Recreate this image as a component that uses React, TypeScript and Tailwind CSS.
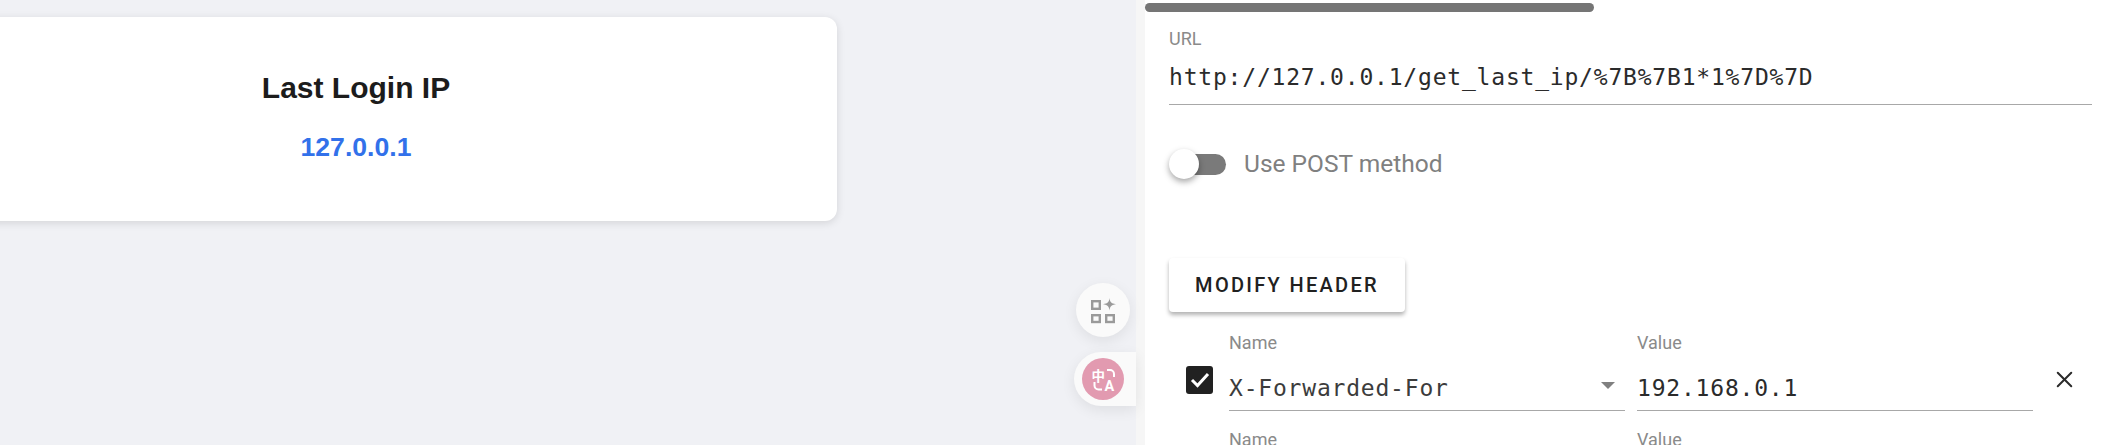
import { X } from 'lucide-react'

const MONO = "font-['DejaVu_Sans_Mono',monospace] text-[23px] tracking-[0.8px]"
const ROBOTO = "font-['Roboto',sans-serif]"
const LABEL = `${ROBOTO} text-[18px] leading-[20px] text-[#8a8a8a]`

function SparkGridIcon() {
  return (
    <svg width="28" height="28" viewBox="0 0 28 28" fill="none" stroke="#9a9a9a" strokeWidth="2.4">
      <rect x="3.2" y="5.2" width="7.6" height="7.6" />
      <rect x="3.2" y="19.2" width="7.6" height="6.8" />
      <rect x="17.2" y="19.2" width="7.6" height="6.8" />
      <path d="M20.5 2 C21 6 22 7.4 27 8.2 C22 9 21 10.4 20.5 14.5 C20 10.4 19 9 14 8.2 C19 7.4 20 6 20.5 2Z" fill="#9a9a9a" stroke="none" />
    </svg>
  )
}

function TranslateIcon() {
  return (
    <svg width="42" height="42" viewBox="0 0 42 42" fill="none">
      <circle cx="21" cy="21" r="21" fill="#e29ab0" />
      <text x="9.5" y="22.5" fontSize="13.5" fontWeight="700" fill="#fff" fontFamily="'Noto Sans CJK SC',sans-serif">中</text>
      <text x="22.5" y="32.5" fontSize="14.5" fontWeight="700" fill="#fff" fontFamily="Roboto,sans-serif">A</text>
      <path d="M25 12h3a4 4 0 0 1 4 4v3" stroke="#fff" strokeWidth="2" />
      <path d="M20 31.5h-3.5a4 4 0 0 1-4-4v-3.5" stroke="#fff" strokeWidth="2" />
    </svg>
  )
}

function HeaderRow() {
  return (
    <div className="flex items-start">
      <div className="w-[60px] pt-[33px] pl-[17px] shrink-0">
        <div className="w-[27px] h-[28px] rounded-[3px] bg-[#212121] flex items-center justify-center">
          <svg width="20" height="16" viewBox="0 0 20 16" fill="none" stroke="#fff" strokeWidth="3">
            <path d="M2 8l5.5 5.5L18 2" />
          </svg>
        </div>
      </div>
      <div className="w-[396px] shrink-0">
        <div className={LABEL}>Name</div>
        <div className="h-[58px] pt-[13px] border-b border-[#a8a8a8] flex items-center justify-between pr-[10px]">
          <span className={`${MONO} text-[#3c3c3c]`}>X-Forwarded-For</span>
          <span className="w-0 h-0 mb-[6px] border-x-[7px] border-x-transparent border-t-[7px] border-t-[#808080]" />
        </div>
      </div>
      <div className="w-[396px] ml-[12px] shrink-0">
        <div className={LABEL}>Value</div>
        <div className="h-[58px] pt-[13px] border-b border-[#a8a8a8] flex items-center">
          <span className={`${MONO} text-[#2b2b2b]`}>192.168.0.1</span>
        </div>
      </div>
      <div className="ml-[18px] pt-[33px]">
        <X size={27} color="#2b2b2b" strokeWidth={1.8} />
      </div>
    </div>
  )
}

export default function App() {
  return (
    <div className="flex h-[445px] w-[2106px] overflow-hidden bg-[#f0f1f5]">
      {/* Main area */}
      <div className="relative w-[1136px] shrink-0 pt-[17px]">
        <div className="-ml-[125px] w-[962px] h-[204px] rounded-[12px] bg-white shadow-[0_2px_8px_rgba(0,0,0,0.12)] flex flex-col items-center pt-[53px] font-['Liberation_Sans',Arial,sans-serif] font-bold">
          <h2 className="text-[30px] leading-[36px] text-[#1c1c1c]">Last Login IP</h2>
          <div className="mt-[25px] text-[26.6px] leading-[32px] text-[#3271ea]">127.0.0.1</div>
        </div>

        {/* Floating buttons */}
        <div className="absolute left-[1076px] top-[283px] w-[54px] h-[54px] rounded-full bg-[#fafafa] shadow-[0_4px_14px_rgba(0,0,0,0.08)] flex items-center justify-center">
          <SparkGridIcon />
        </div>
        <div className="absolute left-[1074px] top-[352px] w-[62px] h-[54px] rounded-l-[27px] bg-[#fafafa] shadow-[0_4px_14px_rgba(0,0,0,0.08)] flex items-center pl-[8px]">
          <TranslateIcon />
        </div>
      </div>

      {/* Gutter */}
      <div className="w-[9px] shrink-0 bg-[#f6f6f6]" />

      {/* Right panel */}
      <div className="relative flex-1 bg-white pl-[24px] pt-[29px]">
        <div className="absolute left-0 top-[3px] w-[449px] h-[9px] rounded-full bg-[#757575]" />

        <div className={LABEL}>URL</div>
        <div className="h-[56px] pt-[2px] w-[923px] border-b border-[#a8a8a8] flex items-center">
          <span className={`${MONO} text-[#2b2b2b]`}>http://127.0.0.1/get_last_ip/%7B%7B1*1%7D%7D</span>
        </div>

        <div className="mt-[44px] flex items-center h-[30px]">
          <div className="relative w-[57px] h-[30px]">
            <div className="absolute left-[10px] top-[5px] w-[47px] h-[21px] rounded-full bg-[#7a7a7a]" />
            <div className="absolute left-0 top-0 w-[30px] h-[30px] rounded-full bg-white shadow-[0_3px_6px_rgba(0,0,0,0.35)]" />
          </div>
          <span className={`${ROBOTO} ml-[18px] text-[24.5px] text-[#808080]`}>Use POST method</span>
        </div>

        <button className={`${ROBOTO} mt-[79px] block w-[236px] h-[54px] rounded-[4px] bg-white text-[20px] font-medium tracking-[2.3px] text-[#212121] shadow-[0_3px_4px_rgba(0,0,0,0.3)]`}>
          MODIFY HEADER
        </button>

        <div className="mt-[21px]">
          <HeaderRow />
          <div className="mt-[19px]">
            <HeaderRow />
          </div>
        </div>
      </div>
    </div>
  )
}
